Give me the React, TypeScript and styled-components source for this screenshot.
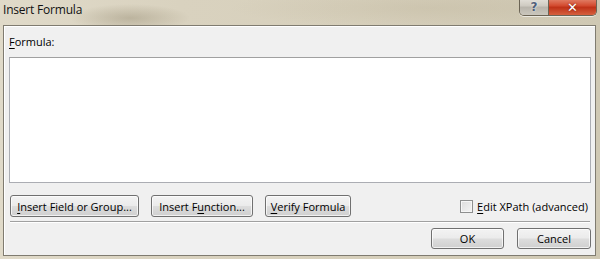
import React from 'react';
import styled, { createGlobalStyle } from 'styled-components';

const GlobalStyle = createGlobalStyle`
	html, body {
		margin: 0;
		padding: 0;
	}
	body {
		width: 600px;
		height: 259px;
		overflow: hidden;
		background: #d3ccb9;
		font-family: 'Open Sans', 'Noto Sans', sans-serif;
	}
`;

const Window = styled.div`
	width: 600px;
	height: 259px;
	display: flex;
	flex-direction: column;
	background:
		radial-gradient(ellipse 60px 14px at 130px 18px, rgba(150, 140, 115, 0.45), transparent),
		radial-gradient(ellipse 200px 20px at 430px 8px, rgba(190, 180, 155, 0.35), transparent),
		linear-gradient(90deg, #e0dac9 0%, #d9d2bf 30%, #d7d0bc 60%, #cfc8b3 100%);
`;

const TitleBar = styled.div`
	height: 25px;
	display: flex;
	flex-direction: row;
	align-items: flex-start;
	justify-content: space-between;
	padding: 0 3px 0 3px;
	box-sizing: border-box;
`;

const Caption = styled.span`
	margin-top: 1px;
	font-size: 12px;
	color: #111;
	letter-spacing: -0.2px;
`;

const CaptionButtons = styled.div`
	display: flex;
	flex-direction: row;
	margin-top: -2px;
	border: 1px solid #6b6455;
	border-top: none;
	border-radius: 0 0 5px 5px;
	overflow: hidden;
	box-shadow: 0 1px 0 rgba(255, 255, 255, 0.6);
`;

const CapButton = styled.div<{ $danger?: boolean; $w: number }>`
	width: ${({ $w }) => $w}px;
	height: 17px;
	display: flex;
	align-items: center;
	justify-content: center;
	padding-top: 1px;
	box-sizing: border-box;
	font-family: 'DejaVu Sans', sans-serif;
	font-weight: bold;
	font-size: ${({ $danger }) => ($danger ? 13 : 12)}px;
	color: ${({ $danger }) => ($danger ? '#ffffff' : '#4f5f7a')};
	text-shadow: ${({ $danger }) =>
		$danger ? '0 0 2px #6a1a0a' : '0 0 2px #ffffff'};
	background: ${({ $danger }) =>
		$danger
			? 'linear-gradient(180deg, #e48a72 0%, #d34b30 45%, #bf3218 55%, #d5603e 100%)'
			: 'linear-gradient(180deg, #e6e3dc 0%, #cfcbc2 45%, #b9b5ac 55%, #cbc7bd 100%)'};
	& + & {
		border-left: 1px solid #6b6455;
	}
`;

const Client = styled.div`
	flex: 1;
	margin: 0 4px 3px 3px;
	background: #f0f0f0;
	border: 1px solid #7f7b70;
	box-shadow: inset 1px 1px 0 #ffffff;
	display: flex;
	flex-direction: column;
	padding: 9px 4px 0 5px;
`;

const Label = styled.div`
	font-size: 11px;
	color: #000;
	line-height: 14px;
	u {
		text-decoration: underline;
		text-underline-offset: 2px;
	}
`;

const FormulaBox = styled.textarea`
	margin-top: 8px;
	height: 126px;
	box-sizing: border-box;
	border: 1px solid #abadb3;
	border-top-color: #a0a0a0;
	background: #ffffff;
	resize: none;
	outline: none;
	font: inherit;
`;

const ActionRow = styled.div`
	display: flex;
	flex-direction: row;
	align-items: center;
	margin-top: 12px;
	padding: 0 3px 0 1px;
	gap: 12px;
`;

const Button = styled.button<{ $w: number; $h?: number }>`
	width: ${({ $w }) => $w}px;
	height: ${({ $h }) => $h || 22}px;
	padding: 0;
	border: 1px solid #707070;
	border-radius: 3px;
	background: linear-gradient(180deg, #f3f3f3 0%, #ebebeb 48%, #dddddd 52%, #cfcfcf 100%);
	box-shadow: inset 0 0 0 1px rgba(255, 255, 255, 0.7);
	font-family: 'Open Sans', 'Noto Sans', sans-serif;
	font-size: 11px;
	color: #000;
	u {
		text-decoration: underline;
		text-underline-offset: 2px;
	}
`;

const Spacer = styled.div`
	flex: 1;
`;

const CheckLabel = styled.label`
	display: flex;
	flex-direction: row;
	align-items: center;
	gap: 4px;
	font-size: 11px;
	color: #000;
	u {
		text-decoration: underline;
		text-underline-offset: 2px;
	}
`;

const CheckBox = styled.span`
	width: 11px;
	height: 11px;
	border: 1px solid #8e8f8f;
	background: linear-gradient(135deg, #dcdcdc 0%, #f4f4f4 100%);
	box-shadow: inset 0 0 0 1px #f6f6f6;
`;

const Separator = styled.div`
	margin-top: 4px;
	height: 0;
	border-top: 1px solid #a0a0a0;
	border-bottom: 1px solid #ffffff;
	margin-left: 1px;
	margin-right: 1px;
`;

const Footer = styled.div`
	display: flex;
	flex-direction: row;
	justify-content: flex-end;
	gap: 13px;
	margin-top: 5px;
	padding-right: 0;
`;

export default function App() {
	return (
		<>
			<GlobalStyle />
			<Window>
				<TitleBar>
					<Caption>Insert Formula</Caption>
					<CaptionButtons>
						<CapButton $w={28}>?</CapButton>
						<CapButton $w={48} $danger>
							✕
						</CapButton>
					</CaptionButtons>
				</TitleBar>
				<Client>
					<Label>
						<u>F</u>ormula:
					</Label>
					<FormulaBox />
					<ActionRow>
						<Button $w={129}>
							<u>I</u>nsert Field or Group...
						</Button>
						<Button $w={102}>
							Insert F<u>u</u>nction...
						</Button>
						<Button $w={86}>
							<u>V</u>erify Formula
						</Button>
						<Spacer />
						<CheckLabel>
							<CheckBox />
							<span>
								<u>E</u>dit XPath (advanced)
							</span>
						</CheckLabel>
					</ActionRow>
					<Separator />
					<Footer>
						<Button $w={73} $h={21}>
							OK
						</Button>
						<Button $w={74} $h={21}>
							Cancel
						</Button>
					</Footer>
				</Client>
			</Window>
		</>
	);
}
